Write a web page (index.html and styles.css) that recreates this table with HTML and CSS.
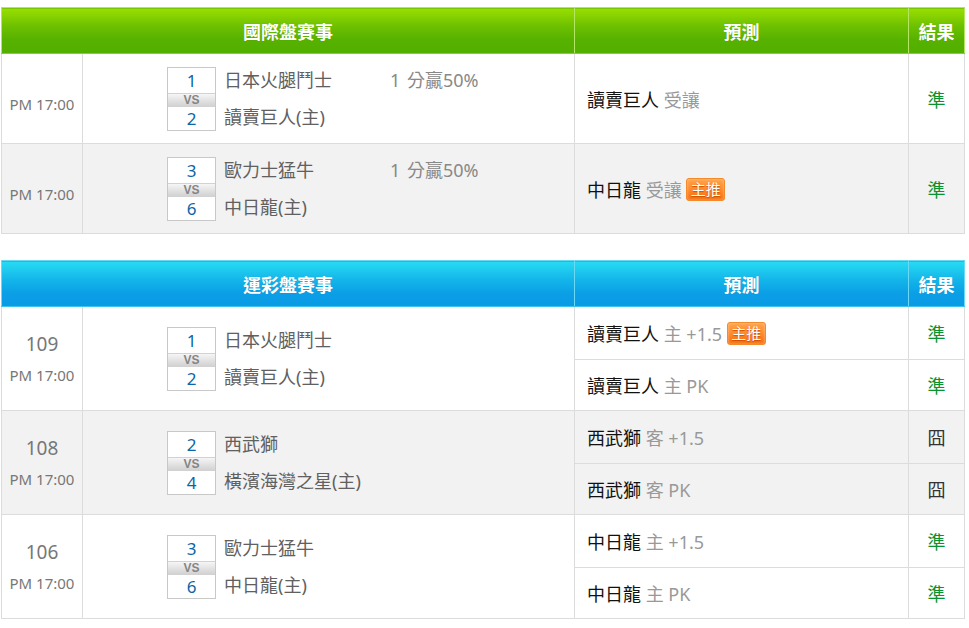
FILE: index.html
```html
<!DOCTYPE html>
<html lang="zh-Hant">
<head>
<meta charset="utf-8">
<title>賽事預測</title>
<link rel="stylesheet" href="styles.css">
</head>
<body>
<div class="page">
  <table class="board green">
    <colgroup><col class="c1"><col class="c2"><col class="c3"><col class="c4"></colgroup>
    <thead>
      <tr><th colspan="2">國際盤賽事</th><th>預測</th><th>結果</th></tr>
    </thead>
    <tbody>
      <tr class="r1">
        <td class="time intl">PM 17:00</td>
        <td class="game">
          <div class="match">
            <div class="score"><span class="num">1</span><span class="vs">VS</span><span class="num">2</span></div>
            <div class="teams">
              <div class="team"><span class="name">日本火腿鬥士</span><span class="odds">1 分贏50%</span></div>
              <div class="team">讀賣巨人(主)</div>
            </div>
          </div>
        </td>
        <td class="pred"><span class="pick">讀賣巨人</span> <span class="mod">受讓</span></td>
        <td class="res ok">準</td>
      </tr>
      <tr class="r1 alt">
        <td class="time intl">PM 17:00</td>
        <td class="game">
          <div class="match">
            <div class="score"><span class="num">3</span><span class="vs">VS</span><span class="num">6</span></div>
            <div class="teams">
              <div class="team"><span class="name">歐力士猛牛</span><span class="odds">1 分贏50%</span></div>
              <div class="team">中日龍(主)</div>
            </div>
          </div>
        </td>
        <td class="pred"><span class="pick">中日龍</span> <span class="mod">受讓</span> <span class="badge">主推</span></td>
        <td class="res ok">準</td>
      </tr>
    </tbody>
  </table>

  <table class="board blue">
    <colgroup><col class="c1"><col class="c2"><col class="c3"><col class="c4"></colgroup>
    <thead>
      <tr><th colspan="2">運彩盤賽事</th><th>預測</th><th>結果</th></tr>
    </thead>
    <tbody>
      <tr class="r2">
        <td class="time" rowspan="2"><div class="no">109</div><div>PM 17:00</div></td>
        <td class="game" rowspan="2">
          <div class="match">
            <div class="score"><span class="num">1</span><span class="vs">VS</span><span class="num">2</span></div>
            <div class="teams">
              <div class="team">日本火腿鬥士</div>
              <div class="team">讀賣巨人(主)</div>
            </div>
          </div>
        </td>
        <td class="pred"><span class="pick">讀賣巨人</span> <span class="mod">主 +1.5</span> <span class="badge">主推</span></td>
        <td class="res ok">準</td>
      </tr>
      <tr class="r2b">
        <td class="pred"><span class="pick">讀賣巨人</span> <span class="mod">主 PK</span></td>
        <td class="res ok">準</td>
      </tr>
      <tr class="r2 alt">
        <td class="time" rowspan="2"><div class="no">108</div><div>PM 17:00</div></td>
        <td class="game" rowspan="2">
          <div class="match">
            <div class="score"><span class="num">2</span><span class="vs">VS</span><span class="num">4</span></div>
            <div class="teams">
              <div class="team">西武獅</div>
              <div class="team">橫濱海灣之星(主)</div>
            </div>
          </div>
        </td>
        <td class="pred"><span class="pick">西武獅</span> <span class="mod">客 +1.5</span></td>
        <td class="res bad">囧</td>
      </tr>
      <tr class="r2b alt">
        <td class="pred"><span class="pick">西武獅</span> <span class="mod">客 PK</span></td>
        <td class="res bad">囧</td>
      </tr>
      <tr class="r2">
        <td class="time" rowspan="2"><div class="no">106</div><div>PM 17:00</div></td>
        <td class="game" rowspan="2">
          <div class="match">
            <div class="score"><span class="num">3</span><span class="vs">VS</span><span class="num">6</span></div>
            <div class="teams">
              <div class="team">歐力士猛牛</div>
              <div class="team">中日龍(主)</div>
            </div>
          </div>
        </td>
        <td class="pred"><span class="pick">中日龍</span> <span class="mod">主 +1.5</span></td>
        <td class="res ok">準</td>
      </tr>
      <tr class="r2b">
        <td class="pred"><span class="pick">中日龍</span> <span class="mod">主 PK</span></td>
        <td class="res ok">準</td>
      </tr>
    </tbody>
  </table>
</div>
</body>
</html>
```

FILE: styles.css
```css
html, body {
  margin: 0;
  padding: 0;
  background: #fff;
}
body {
  font-family: "Noto Sans", "Noto Sans CJK TC", sans-serif;
  color: #555;
}
.page {
  padding: 7px 0 0 1px;
  display: flex;
  flex-direction: column;
  gap: 26px;
  width: 963px;
}
.board {
  width: 963px;
  border-collapse: collapse;
  table-layout: fixed;
}
.c1 { width: 81px; }
.c2 { width: 492px; }
.c3 { width: 334px; }
.c4 { width: 56px; }

.board th {
  height: 45px;
  padding: 0;
  color: #fff;
  font-size: 18px;
  font-weight: bold;
  text-align: center;
  text-shadow: 0 0 1px rgba(0,0,0,0.15);
}
.green th {
  background: linear-gradient(#9ade00 0%, #6cc000 40%, #56b100 70%, #53af00 100%);
  border: 1px solid #b3e663;
  border-bottom-color: #86d21c;
}
.blue th {
  background: linear-gradient(#27dbf2 0%, #14b6ea 40%, #0b9fe6 70%, #0a9ae5 100%);
  border: 1px solid #6bd8f4;
  border-bottom-color: #3cc4f0;
}

.board td {
  border: 1px solid #dcdcdc;
  padding: 0;
  vertical-align: middle;
}
.board .alt td { background: #f2f2f2; }

.board .r1 td { height: 89px; }
.board .r1 td.intl { height: 78px; padding-top: 11px; }
.board .r2 td.pred, .board .r2 td.res { height: 52px; }
.board .r2b td.pred, .board .r2b td.res { height: 50px; }

.time {
  text-align: center;
  font-size: 15px;
  color: #777;
}
.time .no {
  font-size: 19px;
  line-height: 22px;
  margin-bottom: 10px;
}

.board td.game { padding-left: 84px; }
.match {
  display: flex;
  align-items: flex-start;
  gap: 8px;
}
.score {
  width: 47px;
  border: 1px solid #c8c8c8;
  display: flex;
  flex-direction: column;
  background: #fff;
}
.score .num {
  height: 25px;
  line-height: 25px;
  text-align: center;
  font-size: 17px;
  color: #0b65a6;
}
.score .num:last-child { height: 23px; line-height: 23px; }
.score .vs {
  height: 13px;
  line-height: 13px;
  text-align: center;
  font-family: "Liberation Sans", sans-serif;
  font-size: 12px;
  font-weight: bold;
  color: #858585;
  background: linear-gradient(#f6f6f6, #dedede 60%, #d0d0d0);
  border-top: 1px solid #d2d2d2;
}
.teams {
  height: 63px;
  display: flex;
  flex-direction: column;
  justify-content: space-between;
  font-size: 18px;
  color: #606060;
}
.team {
  line-height: 26px;
  display: flex;
  white-space: nowrap;
}
.team .name { width: 166px; }
.team .odds { color: #888; word-spacing: 2px; }

.board td.pred {
  padding-left: 12px;
  font-size: 18px;
  white-space: nowrap;
}
.pick { color: #111; }
.mod { color: #999; }
.badge {
  display: inline-block;
  vertical-align: 2px;
  width: 37px;
  height: 21px;
  line-height: 21px;
  text-align: center;
  font-size: 15px;
  color: #fff;
  border: 1px solid #f58a2a;
  border-radius: 3px;
  background: linear-gradient(#ffa24a, #ff8a2a 50%, #f46c0c);
  box-shadow: inset 0 0 3px rgba(255,255,255,0.5);
  text-shadow: 0 1px 1px #c85000;
}

.res {
  text-align: center;
  font-size: 18px;
}
.res.ok { color: #0a9130; }
.res.bad { color: #333; }
```
